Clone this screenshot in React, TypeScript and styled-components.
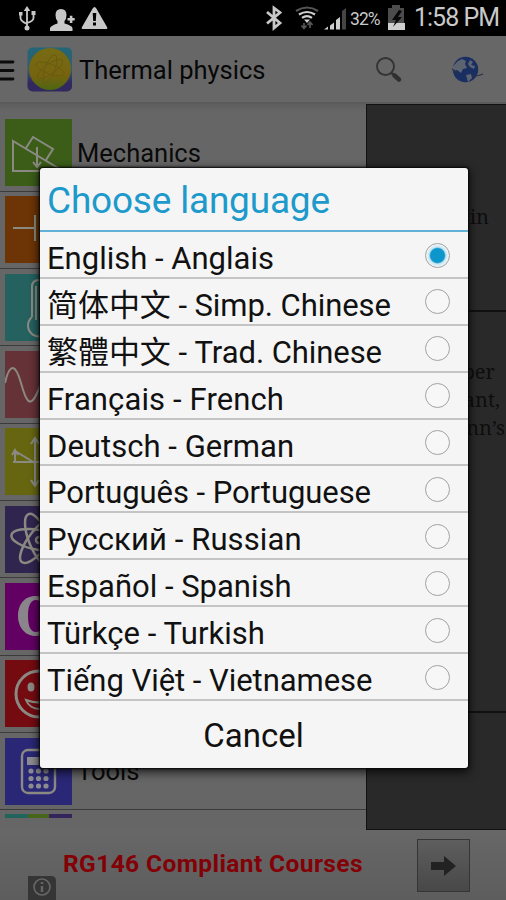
import React from 'react';
import styled, { createGlobalStyle } from 'styled-components';

const Global = createGlobalStyle`
  * { box-sizing: border-box; }
  body { margin: 0; background: #666; font-family: Roboto, "Noto Sans CJK SC", sans-serif; }
`;

const Screen = styled.div`
  position: relative;
  display: flex;
  flex-direction: column;
  width: 506px;
  height: 900px;
  overflow: hidden;
  background: #666;
`;

const StatusBar = styled.header`
  display: flex;
  flex: none;
  height: 36px;
  background: #000;
  color: #c9c9c9;
`;

const StatusIcons = styled.svg<{ $width: number }>`
  flex: none;
  width: ${(p) => p.$width}px;
  height: 36px;
`;

const Battery = styled.span`
  width: 36px;
  padding-top: 9px;
  font-size: 17.5px;
  line-height: 20px;
  letter-spacing: -0.9px;
`;

const Clock = styled.span`
  padding-top: 4px;
  font-size: 25px;
  line-height: 28px;
  letter-spacing: -1px;
  white-space: nowrap;
`;

const ActionBar = styled.div`
  display: flex;
  flex: none;
  align-items: center;
  height: 68px;
  border-bottom: 2px solid #5b5b5b;
  background: #676767;
`;

const ActionIcon = styled.svg<{ $width: number }>`
  flex: none;
  width: ${(p) => p.$width}px;
  height: 66px;
`;

const PageTitle = styled.h1`
  flex: 1;
  margin: 0;
  padding: 2px 0 0 1px;
  color: #070707;
  font-size: 25.5px;
  font-weight: 400;
  white-space: nowrap;
`;

const Body = styled.main`
  display: flex;
  flex: none;
  height: 726px;
`;

const TopicList = styled.nav`
  flex: none;
  width: 366px;
  padding-top: 10.5px;
  overflow: hidden;
  background: linear-gradient(#5e5e5e, #666 8px);
`;

const Topic = styled.div`
  display: flex;
  align-items: center;
  height: 77.3px;
  padding-left: 5px;
  border-bottom: 1.5px solid #3b3b3b;
`;

const Tile = styled.svg<{ $color: string }>`
  flex: none;
  width: 67px;
  height: 67px;
  background: ${(p) => p.$color};
  fill: none;
  stroke: #8a8a83;
  stroke-width: 2;
`;

const TopicName = styled.span`
  padding: 0 0 0 5px;
  color: #0a0a0a;
  font-size: 25.5px;
`;

const Stripes = styled.div`
  width: 67px;
  height: 4px;
  margin: 4px 0 0 5px;
  background: linear-gradient(90deg, #20645c 0 34%, #46661c 34% 66%, #33255c 66%);
`;

const Article = styled.section`
  flex: 1;
  border: solid #111;
  border-width: 1px 0 1px 1px;
  background: #292929;
`;

const Passage = styled.p<{ $height: number; $top: number }>`
  height: ${(p) => p.$height}px;
  margin: 0;
  padding: ${(p) => p.$top}px 0 0;
  border-bottom: 2px solid #101010;
  color: #0e0e0e;
  font-family: "Noto Serif", "DejaVu Serif", serif;
  font-size: 20px;
  line-height: 28px;
  white-space: nowrap;
`;

const Line = styled.span<{ $right: number }>`
  display: block;
  padding-right: ${(p) => p.$right}px;
  text-align: right;
`;

const AdBar = styled.footer`
  display: flex;
  flex: 1;
  align-items: flex-start;
  background: linear-gradient(#676767, #5d5d5d);
`;

const InfoBadge = styled.svg`
  flex: none;
  align-self: flex-end;
  width: 34px;
  height: 25px;
  margin-left: 28px;
`;

const AdText = styled.strong`
  flex: 1;
  padding: 19px 0 0 1px;
  color: #820006;
  font-size: 24.5px;
  font-weight: 700;
  line-height: 30px;
  letter-spacing: 0.4px;
  white-space: nowrap;
`;

const AdButton = styled.button`
  width: 53px;
  height: 53px;
  margin: 9px 36px 0 0;
  padding: 0;
  border: 1.5px solid #353535;
  background: linear-gradient(#5e5e5e, #484848);
`;

const Dialog = styled.div`
  position: absolute;
  top: 168px;
  left: 40px;
  display: flex;
  flex-direction: column;
  width: 428px;
  height: 600px;
  border-radius: 3px;
  background: #f5f5f5;
  box-shadow: 0 0 2px 1px #080808, 0 3px 9px 2px rgba(0, 0, 0, 0.65);
  color: #111;
`;

const DialogTitle = styled.h2`
  flex: none;
  height: 64px;
  margin: 0;
  padding: 13px 0 0 7px;
  border-bottom: 2px solid #62b2d8;
  color: #1d9acb;
  font-size: 37px;
  font-weight: 400;
  line-height: 40px;
  letter-spacing: -0.2px;
  white-space: nowrap;
`;

const Option = styled.div`
  display: flex;
  flex: none;
  justify-content: space-between;
  height: 46.9px;
  padding: 0 18px 0 7px;
  border-bottom: 2px solid #c4c4c4;
`;

const OptionLabel = styled.span<{ $spacing: number }>`
  height: 36px;
  padding-top: 9px;
  font-size: 31px;
  line-height: 36px;
  letter-spacing: ${(p) => p.$spacing}px;
  white-space: nowrap;
`;

const Radio = styled.span<{ $checked: boolean }>`
  width: 25px;
  height: 25px;
  margin-top: 10.5px;
  border: 1.4px solid #a2a2a2;
  border-radius: 50%;
  background: ${(p) =>
    p.$checked ? 'radial-gradient(circle, #0d96cb 6.9px, #c5e5f1 8.4px, #eef6f8 11px)' : '#f7f7f7'};
`;

const Cancel = styled.button`
  flex: 1;
  padding: 2px 1px 0 0;
  border: 0;
  background: none;
  color: #111;
  font: 400 33px Roboto, sans-serif;
`;

const topics: { color: string; name: string; art: React.ReactNode }[] = [
  { color: '#3b5d18', name: 'Mechanics', art: <path d="M8 22v30h50zM21 29l7-11 20 12-7 11M32 28v18M28 43l4 5 4-5" /> },
  { color: '#6d3506', name: 'Electricity', art: <path d="M8 32h21M30 19v26M38 11v42M38 32h22" /> },
  { color: '#25615f', name: 'Thermal physics', art: <path d="M27 43V13q0-7 7-7t7 7v30a11 11 0 1 1-14 0M31 12v34" /> },
  { color: '#653238', name: 'Waves', art: <path d="M0 32C5 10 11 14 16 32s9 27 17 8 10-25 17-8 10 24 17 4" /> },
  { color: '#666611', name: 'Optics', art: <path d="M30 10v48M26 16l4-6 4 6M26 52l4 6 4-6M8 34h50M10 34V23l20 12M7 27l3-5 3 5" /> },
  {
    color: '#30254f', name: 'Atomic physics',
    art: <g strokeWidth="2.5"><ellipse cx="34" cy="34" rx="28" ry="10" transform="rotate(10 34 34)" /><ellipse cx="34" cy="34" rx="28" ry="10" transform="rotate(68 34 34)" /><ellipse cx="34" cy="34" rx="28" ry="10" transform="rotate(128 34 34)" /><circle cx="34" cy="34" r="3" /></g>,
  },
  { color: '#620064', name: 'Constants', art: <g fill="#8a858a" stroke="none"><path fillRule="evenodd" d="M31 13c-13 0-18 10-18 20s6 20 18 20 18-9 18-20-6-20-18-20m0 4c6 0 9 7 9 16s-3 16-9 16-8-7-8-16 2-16 8-16" /></g> },
  {
    color: '#740b10', name: 'Fun',
    art: <><circle cx="34" cy="34" r="23" strokeWidth="3" /><g fill="#8a8a83" stroke="none"><ellipse cx="26" cy="27" rx="3.5" ry="4.5" /><ellipse cx="43" cy="27" rx="3.5" ry="4.5" /></g><path d="M21 40q13 5 26 0c-3 12-22 12-26 0z" /></>,
  },
  {
    color: '#2a2776', name: 'Tools',
    art: <><rect x="17" y="12" width="33" height="43" rx="6" strokeWidth="2.4" /><g fill="#8b8b91" stroke="none"><rect x="22" y="19" width="23" height="8" />{[33, 40.5, 48].map((y) => [26, 33.5, 41].map((x) => <circle key={`${x}-${y}`} cx={x} cy={y} r="2.6" />))}</g></>,
  },
];

const languages: [string, number][] = [
  ['English - Anglais', 0],
  ['简体中文 - Simp. Chinese', -0.06],
  ['繁體中文 - Trad. Chinese', -0.06],
  ['Français - French', 0.12],
  ['Deutsch - German', 0.04],
  ['Português - Portuguese', -0.06],
  ['Русский - Russian', 0.1],
  ['Español - Spanish', 0],
  ['Türkçe - Turkish', 0.06],
  ['Tiếng Việt - Vietnamese', -0.04],
];

function Notifications() {
  return (
    <StatusIcons $width={261} viewBox="0 0 261 36">
      <g fill="none" stroke="#c8c8c8" strokeWidth="1.8">
        <path d="M27 9v19M20.5 14v4q0 3 6.5 6M33.5 13v5q0 3-6.500 5" />
      </g>
      <g fill="#c8c8c8">
        <path d="M27 6l3.3 5h-6.6zM19 12h3.5v3.5H19zM31.500 11h4v4h-4z" />
        <circle cx="27" cy="28" r="2.500" />
        <path d="M50 31v-3q1-2.500 7.500-4.500V21q-2-2-2-6 0-6 5.500-6t5.500 6q0 4-2 6v2.500Q72 25.500 72.500 28v3zM67.500 18h2.300V15.700h2.600V18h2.300v2.600h-2.300V23h-2.600v-2.400h-2.300z" />
        <path fillRule="evenodd" d="M94.500 7q1 0 2 1.700L107 27q1 2-1 2H83q-2 0-1-2L92.500 8.700Q93.500 7 94.500 7m-1.800 6 .5 8h2.600l.5-8zm.3 9.500V25.500h3v-3z" />
      </g>
    </StatusIcons>
  );
}

function Connectivity() {
  return (
    <StatusIcons $width={89} viewBox="261 0 89 36">
      <path d="M267 12l13 11-6 5V8l6 4.500-13 11" fill="none" stroke="#c8c8c8" strokeWidth="2.800" />
      <g fill="none" strokeWidth="2.200">
        <path d="M296 11q11-7 22 0" stroke="#555" />
        <path d="M299 14.500q8-5 16 0M302 17.800q5-3.500 10 0" stroke="#d0d0d0" />
        <path d="M304 23v5M301.500 25.500l2.500 3 2.500-3M310 28v-6M307.500 25l2.500-3 2.500 3" stroke="#555" strokeWidth="1.700" />
      </g>
      <path d="M304 19.500h6l-3 3.500z" fill="#d0d0d0" />
      <path d="M324 29.500l4-3v3zM330 25.500l4-3v7h-4zM336 20l4-3v12.500h-4z" fill="#cfcfcf" />
      <path d="M342 11l4-3v21.500h-4z" fill="#444" />
    </StatusIcons>
  );
}

export default function App() {
  return (
    <>
      <Global />
      <Screen>
        <StatusBar>
          <Notifications />
          <Connectivity />
          <Battery>32%</Battery>
          <StatusIcons $width={28} viewBox="386 0 28 36">
            <path d="M388 8h4V5h8v3h4v16h-16z" fill="#4c4c4c" />
            <path d="M388 23h17v7h-17z" fill="#cfcfcf" />
            <path d="M399 10l-7 10h4l-3 7 9-10h-4l4-6z" fill="#080808" />
          </StatusIcons>
          <Clock>1:58 PM</Clock>
        </StatusBar>
        <ActionBar>
          <ActionIcon $width={78} viewBox="0 36 78 66">
            <defs>
              <linearGradient id="badge" x2="0" y2="1"><stop stopColor="#226779" /><stop offset=".5" stopColor="#365d69" /><stop offset=".8" stopColor="#30285f" /></linearGradient>
              <linearGradient id="sun" x2="0" y2="1"><stop stopColor="#776c13" /><stop offset=".65" stopColor="#77630f" /><stop offset="1" stopColor="#4c6611" /></linearGradient>
            </defs>
            <path d="M0 62h13M0 70.500h13M0 79h13" stroke="#0c0c0c" strokeWidth="2.800" strokeLinecap="round" />
            <rect x="27.500" y="47.500" width="44.500" height="44" rx="5" fill="url(#badge)" />
            <circle cx="50" cy="69" r="21" fill="url(#sun)" />
            <g fill="none" stroke="#685a12" strokeWidth=".8">
              <ellipse cx="50" cy="69" rx="15" ry="5" transform="rotate(20 50 69)" />
              <ellipse cx="50" cy="69" rx="15" ry="5" transform="rotate(110 50 69)" />
              <ellipse cx="50" cy="69" rx="15" ry="5" transform="rotate(145 50 69)" />
            </g>
          </ActionIcon>
          <PageTitle>Thermal physics</PageTitle>
          <ActionIcon $width={136} viewBox="370 36 136 66">
            <circle cx="385.500" cy="66.500" r="8.500" fill="none" stroke="#333" strokeWidth="1.900" />
            <path d="M391.500 73l3 2.500" stroke="#333" strokeWidth="2.500" />
            <path d="M394.500 75.500l4.500 4" stroke="#303030" strokeWidth="4.500" strokeLinecap="round" />
            <circle cx="465.500" cy="69.500" r="12.700" fill="#192e61" />
            <path d="M458 61l4-2 4 2-1 3 2 4-4 1-2 4-4-3-4 1v-5zM470 60l3 2-2 3 4 1-1 3-4-2-2-3zM466 75l5-1 1 4-4 4z" fill="#5d6470" />
            <path d="M452 69l7 5M473 76q6 0 10-2" stroke="#28334c" fill="none" strokeWidth="1.300" />
          </ActionIcon>
        </ActionBar>
        <Body>
          <TopicList>
            {topics.map((topic) => (
              <Topic key={topic.name}>
                <Tile viewBox="0 0 67 67" $color={topic.color}>{topic.art}</Tile>
                <TopicName>{topic.name}</TopicName>
              </Topic>
            ))}
            <Stripes />
          </TopicList>
          <Article>
            <Passage $height={207} $top={98}><Line $right={17}>in</Line></Passage>
            <Passage $height={401} $top={46}>
              <Line $right={11}>per</Line>
              <Line $right={6}>stant,</Line>
              <Line $right={1}>mann’s</Line>
            </Passage>
          </Article>
        </Body>
        <AdBar>
          <InfoBadge viewBox="28 875 34 25">
            <path d="M28 876h23q5 0 5 5v19H28z" fill="#353535" />
            <circle cx="42" cy="887" r="8" fill="none" stroke="#656565" strokeWidth="1.700" />
            <path d="M42 882v2M42 886v6" stroke="#656565" strokeWidth="2.500" />
          </InfoBadge>
          <AdText>RG146 Compliant Courses</AdText>
          <AdButton aria-label="Open">
            <svg width="50" height="50" viewBox="0 0 50 50"><path d="M12 22h13v-6l12 10-12 10v-6H12z" fill="#222" /></svg>
          </AdButton>
        </AdBar>
        <Dialog role="dialog">
          <DialogTitle>Choose language</DialogTitle>
          {languages.map(([label, spacing], i) => (
            <Option key={label}>
              <OptionLabel $spacing={spacing}>{label}</OptionLabel>
              <Radio $checked={i === 0} />
            </Option>
          ))}
          <Cancel>Cancel</Cancel>
        </Dialog>
      </Screen>
    </>
  );
}
